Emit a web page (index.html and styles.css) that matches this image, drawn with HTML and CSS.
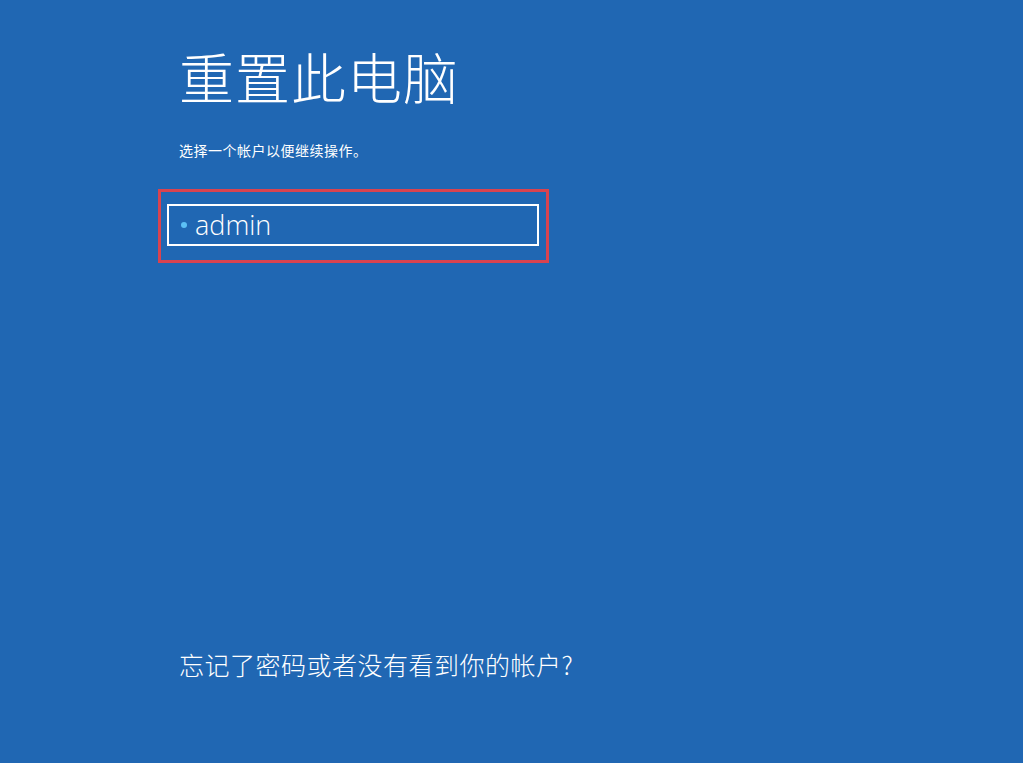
FILE: index.html
```html
<html lang="zh-CN">

<head>
    <meta charset="UTF-8">
    <meta name="viewport" content="width=device-width, initial-scale=1.0">
    <title>重置此电脑</title>
    <link rel="stylesheet" href="styles.css">
</head>

<body>
    <div class="page">
        <h1 class="title">重置此电脑</h1>
        <p class="hint">选择一个帐户以便继续操作。</p>

        <div class="highlight">
            <div class="account">
                <span class="dot"></span>
                <span class="name">admin</span>
            </div>
        </div>

        <p class="forgot">忘记了密码或者没有看到你的帐户?</p>
    </div>
</body>

</html>
```

FILE: styles.css
```css
html, body {
    margin: 0;
    height: 100%;
}

body {
    background-color: #2067b3;
    color: #fff;
    font-family: "Noto Sans CJK SC", "Open Sans", sans-serif;
}

.page {
    height: 100%;
    box-sizing: border-box;
    padding: 41px 0 0 179px;
    display: flex;
    flex-direction: column;
}

.title {
    margin: 0;
    font-size: 55px;
    font-weight: 300;
    line-height: 68px;
    letter-spacing: 1px;
}

.hint {
    margin: 31px 0 0 0;
    font-size: 14px;
    line-height: 20px;
    letter-spacing: 0.5px;
}

.highlight {
    margin: 29px 0 0 -21px;
    width: 372px;
    padding: 12px 7px 14px 6px;
    border: 3px solid #d9434f;
}

.account {
    height: 38px;
    border: 2px solid #fff;
    display: flex;
    align-items: center;
}

.dot {
    width: 6px;
    height: 6px;
    border-radius: 50%;
    background-color: #5cc0f5;
    margin: 0 9px 0 12px;
}

.name {
    font-family: "Open Sans", sans-serif;
    font-weight: 300;
    font-size: 27px;
    line-height: 30px;
    margin-left: -1px;
}

.forgot {
    margin: auto 0 83px 0;
    font-size: 25px;
    font-weight: 300;
    line-height: 32px;
    letter-spacing: 0.5px;
}
```
